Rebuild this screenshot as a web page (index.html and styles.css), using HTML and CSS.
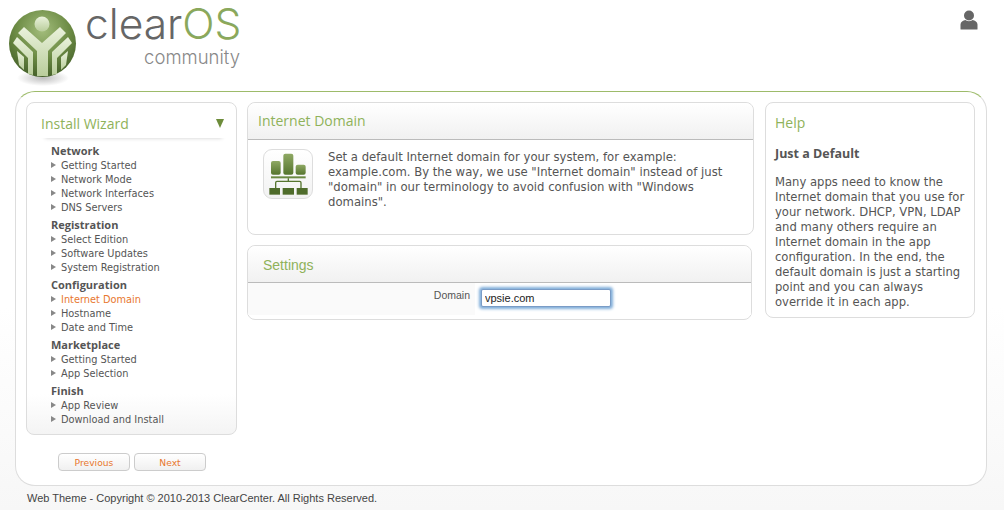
FILE: index.html
```html
<!DOCTYPE html>
<html>
<head>
<meta charset="UTF-8">
<title>Install Wizard - Internet Domain</title>
<link rel="stylesheet" href="styles.css">
</head>
<body>
    <div class="header">
        <svg class="logo-mark" width="70" height="84" viewBox="0 0 70 84">
            <defs>
                <radialGradient id="ball" cx="50%" cy="30%" r="75%">
                    <stop offset="0" stop-color="#a3bd7c"/>
                    <stop offset="0.55" stop-color="#6b8a43"/>
                    <stop offset="1" stop-color="#3f5a26"/>
                </radialGradient>
                <radialGradient id="shade" cx="50%" cy="50%" r="50%">
                    <stop offset="0" stop-color="#888" stop-opacity="0.55"/>
                    <stop offset="1" stop-color="#888" stop-opacity="0"/>
                </radialGradient>
                <linearGradient id="figure" x1="0" y1="0" x2="0" y2="1">
                    <stop offset="0" stop-color="#eaf2dc"/>
                    <stop offset="1" stop-color="#b9cd9b"/>
                </linearGradient>
            </defs>
            <ellipse cx="34" cy="73" rx="26" ry="8" fill="url(#shade)"/>
            <circle cx="33.5" cy="38.5" r="33.5" fill="url(#ball)"/>
            <circle cx="33" cy="19" r="7.5" fill="url(#figure)"/>
            <path d="M9 28 L15 22 L33 38 L51 22 L57 28 L39 46 V71 H28 V46 Z" fill="url(#figure)"/>
            <path d="M4 38 L8 32 L24 47 V70 L19 69 V53 Z" fill="url(#figure)"/>
            <path d="M63 38 L59 32 L43 47 V70 L48 69 V53 Z" fill="url(#figure)"/>
            <path d="M8 46 L15 52 V65 L10 60 Z" fill="url(#figure)"/>
            <path d="M59 46 L52 52 V65 L57 60 Z" fill="url(#figure)"/>
        </svg>
        <div class="brand">
            <div class="brand-name">clear<span class="brand-os">OS</span></div>
            <div class="brand-edition">community</div>
        </div>
        <svg class="user-icon" width="18" height="20" viewBox="0 0 18 20">
            <circle cx="9" cy="5.5" r="5" fill="#666"/>
            <path d="M0.5 19 V14.5 C0.5 12 3 10.5 5.5 10 C7 11.5 11 11.5 12.5 10 C15 10.5 17.5 12 17.5 14.5 V19 Q17.5 19.5 17 19.5 H1 Q0.5 19.5 0.5 19 Z" fill="#666"/>
        </svg>
    </div>

    <div class="main">
        <div class="left-col">
            <div class="box wizard">
                <div class="wizard-title">
                    <span>Install Wizard</span>
                    <span class="wizard-arrow"></span>
                </div>
                <div class="menu">
                    <div class="menu-group">Network</div>
                    <a class="menu-item">Getting Started</a>
                    <a class="menu-item">Network Mode</a>
                    <a class="menu-item">Network Interfaces</a>
                    <a class="menu-item">DNS Servers</a>
                    <div class="menu-group">Registration</div>
                    <a class="menu-item">Select Edition</a>
                    <a class="menu-item">Software Updates</a>
                    <a class="menu-item">System Registration</a>
                    <div class="menu-group">Configuration</div>
                    <a class="menu-item current">Internet Domain</a>
                    <a class="menu-item">Hostname</a>
                    <a class="menu-item">Date and Time</a>
                    <div class="menu-group">Marketplace</div>
                    <a class="menu-item">Getting Started</a>
                    <a class="menu-item">App Selection</a>
                    <div class="menu-group">Finish</div>
                    <a class="menu-item">App Review</a>
                    <a class="menu-item">Download and Install</a>
                </div>
            </div>
            <div class="wizard-buttons">
                <button class="btn">Previous</button>
                <button class="btn">Next</button>
            </div>
        </div>

        <div class="center-col">
            <div class="box intro">
                <div class="box-head">Internet Domain</div>
                <div class="intro-body">
                    <div class="app-icon">
                        <!-- drawn in 3x units of the icon tile -->
                        <svg width="48" height="48" viewBox="57 164 144 144">
                            <defs>
                                <linearGradient id="bar" x1="0" y1="0" x2="0" y2="1">
                                    <stop offset="0" stop-color="#8fa964"/>
                                    <stop offset="1" stop-color="#56752f"/>
                                </linearGradient>
                            </defs>
                            <rect x="78" y="197" width="29" height="41" rx="6" fill="url(#bar)"/>
                            <rect x="115" y="175" width="30" height="63" rx="6" fill="url(#bar)"/>
                            <rect x="152" y="208" width="30" height="30" rx="6" fill="url(#bar)"/>
                            <rect x="78" y="243" width="104" height="6" fill="#6b8a43"/>
                            <path d="M130 249 V258 M92 278 V262 Q92 258 96 258 H164 Q168 258 168 262 V278" fill="none" stroke="#56752f" stroke-width="4"/>
                            <rect x="73" y="278" width="32" height="20" fill="#4f6c2b"/>
                            <rect x="113" y="278" width="34" height="20" fill="#4f6c2b"/>
                            <rect x="155" y="278" width="33" height="20" fill="#4f6c2b"/>
                        </svg>
                    </div>
                    <p class="intro-text">Set a default Internet domain for your system, for example: example.com. By the way, we use "Internet domain" instead of just "domain" in our terminology to avoid confusion with "Windows domains".</p>
                </div>
            </div>
            <div class="box settings">
                <div class="box-head settings-head">Settings</div>
                <div class="field-row">
                    <label class="field-label" for="domain">Domain</label>
                    <div class="field-value">
                        <input class="field-input" id="domain" type="text" value="vpsie.com">
                    </div>
                </div>
            </div>
        </div>

        <div class="box help">
            <div class="help-title">Help</div>
            <div class="help-sub">Just a Default</div>
            <p class="help-text">Many apps need to know the Internet domain that you use for your network. DHCP, VPN, LDAP and many others require an Internet domain in the app configuration. In the end, the default domain is just a starting point and you can always override it in each app.</p>
        </div>
    </div>

    <div class="footer">Web Theme - Copyright © 2010-2013 ClearCenter. All Rights Reserved.</div>
</body>
</html>
```

FILE: styles.css
```css
html, body {
    height: 510px;
    overflow: hidden;
}

body {
    margin: 0;
    font-family: "DejaVu Sans", Verdana, sans-serif;
    font-size: 11px;
    color: #555;
    background: linear-gradient(to bottom, #fff 60%, #f7f7f7);
}

.header {
    height: 91px;
    display: flex;
    align-items: flex-start;
    padding-left: 9px;
    padding-right: 26px;
    box-sizing: border-box;
}

.logo-mark {
    margin-top: 5px;
    flex: none;
}

.brand {
    margin-left: 6px;
    width: 157px;
}

.brand-name {
    font-family: "Inter", sans-serif;
    font-weight: 300;
    font-size: 42.5px;
    line-height: 38px;
    margin-top: 5px;
    color: #666;
}

.brand-os {
    color: #8aa85c;
}

.brand-edition {
    font-family: "Inter", sans-serif;
    font-weight: 300;
    font-size: 18.5px;
    line-height: 18px;
    text-align: right;
    color: #888;
    margin-top: 5px;
    padding-right: 2px;
}

.user-icon {
    margin-left: auto;
    margin-top: 10px;
}

.main {
    margin: 0 17px 0 15px;
    height: 395px;
    box-sizing: border-box;
    padding: 10px 11px 0 10px;
    display: flex;
    gap: 10px;
    align-items: flex-start;
    background: #fff;
    border: 1px solid #ddd;
    border-top-color: #9dbb6a;
    border-radius: 20px;
}

.box {
    background: #fff;
    border: 1px solid #ddd;
    border-radius: 8px;
    box-sizing: border-box;
}

.left-col {
    width: 211px;
    flex: none;
}

.wizard {
    height: 333px;
    background: linear-gradient(to bottom, #fff 88%, #f4f4f4);
}

.wizard-title {
    display: flex;
    justify-content: space-between;
    align-items: center;
    height: 29px;
    margin: 0 10px 0 14px;
    font-family: "Open Sans", sans-serif;
    font-size: 14px;
    color: #8fb25a;
    box-shadow: 0 4px 4px -4px #ccc;
    padding-top: 6px;
}

.wizard-arrow {
    width: 0;
    height: 0;
    border-left: 4px solid transparent;
    border-right: 4px solid transparent;
    border-top: 9px solid #6d8c3a;
    margin-right: 2px;
}

.menu {
    padding: 6px 0 0 24px;
}

.menu-group {
    font-family: "Open Sans", sans-serif;
    font-weight: bold;
    line-height: 14px;
    margin-top: 4px;
    color: #555;
}

.menu-group:first-child {
    margin-top: 0;
}

.menu-item {
    display: block;
    position: relative;
    padding: 1px 0 0 10px;
    line-height: 13px;
    font-size: 9.8px;
}

.menu-item::before {
    content: "";
    position: absolute;
    left: 0;
    top: 4px;
    border-left: 5px solid #888;
    border-top: 3px solid transparent;
    border-bottom: 3px solid transparent;
}

.current {
    color: #e8772e;
}

.wizard-buttons {
    display: flex;
    gap: 4px;
    margin-top: 18px;
    padding-left: 32px;
}

.btn {
    width: 72px;
    height: 18px;
    padding: 0;
    font-family: inherit;
    font-size: 9.2px;
    color: #e8772e;
    background: linear-gradient(to bottom, #fff, #f0f0f0);
    border: 1px solid #ccc;
    border-radius: 4px;
}

.center-col {
    width: 507px;
    flex: none;
    display: flex;
    flex-direction: column;
    gap: 10px;
}

.box-head {
    height: 36px;
    line-height: 36px;
    padding-left: 10px;
    font-family: "Open Sans", sans-serif;
    font-size: 14px;
    color: #8fb25a;
    background: linear-gradient(to bottom, #fff, #f1f1f1);
    border-bottom: 1px solid #bbb;
    border-radius: 8px 8px 0 0;
}

.intro {
    height: 133px;
}

.intro-body {
    display: flex;
    padding: 9px 0 0 15px;
    gap: 15px;
}

.app-icon {
    width: 50px;
    height: 50px;
    flex: none;
    box-sizing: border-box;
    border: 1px solid #ddd;
    border-radius: 9px;
    background: linear-gradient(to bottom, #fff, #f2f2f2);
}

.app-icon svg {
    display: block;
}

.intro-text {
    margin: 1px 0 0;
    width: 405px;
    font-size: 11.67px;
    line-height: 15px;
}

.settings {
    width: 505px;
    height: 75px;
}

.settings-head {
    padding-left: 15px;
    line-height: 38px;
    font-family: "Liberation Sans", Arial, sans-serif;
}

.field-row {
    display: flex;
    height: 32px;
    background: #fafafa;
    border-radius: 0 0 0 8px;
}

.field-label {
    width: 227px;
    box-sizing: border-box;
    padding-right: 5px;
    text-align: right;
    line-height: 24px;
    font-family: "Liberation Sans", Arial, sans-serif;
    font-size: 10.5px;
    background: #fafafa;
}

.field-value {
    flex: 1;
    background: #fff;
    padding: 6px 0 0 6px;
}

.field-input {
    display: block;
    width: 130px;
    height: 18px;
    box-sizing: border-box;
    padding: 0 3px;
    font-family: "Liberation Sans", Arial, sans-serif;
    font-size: 11px;
    color: #222;
    border: 1px solid #7a9cc6;
    outline: none;
    box-shadow: 0 0 3px 1.5px #7fadd9;
    border-radius: 2px;
}

.help {
    width: 210px;
    height: 216px;
    flex: none;
    margin-left: 1px;
    padding: 0 9px;
}

.help-title {
    font-family: "Open Sans", sans-serif;
    font-size: 14px;
    color: #8fb25a;
    margin-top: 11px;
    line-height: 17px;
}

.help-sub {
    font-family: "Open Sans", sans-serif;
    font-weight: bold;
    font-size: 12.5px;
    margin-top: 15px;
    line-height: 15px;
}

.help-text {
    margin: 14px 0 0;
    font-size: 11.6px;
    line-height: 15px;
}

.footer {
    padding: 6px 0 0 27px;
    font-family: "Liberation Sans", Arial, sans-serif;
    font-size: 11px;
    color: #444;
}
```
